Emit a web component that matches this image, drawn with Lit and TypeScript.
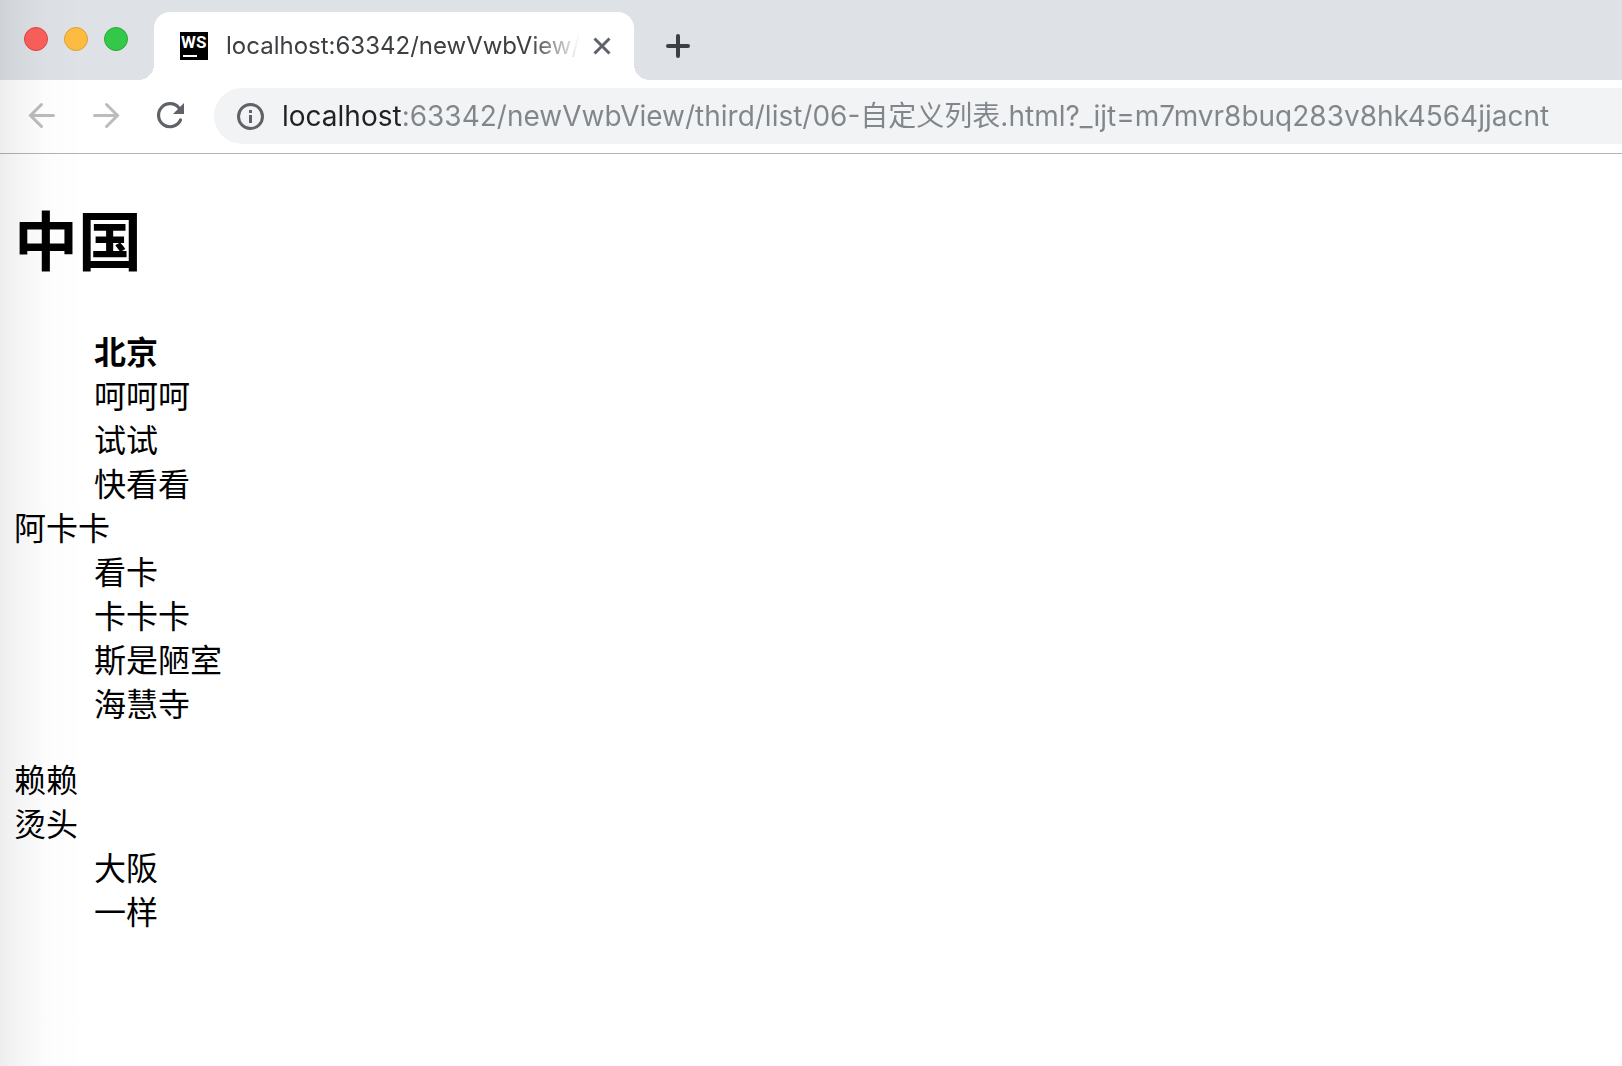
import { LitElement, html, css } from "lit";
import { customElement, property } from "lit/decorators.js";

@customElement("tab-strip")
export class TabStrip extends LitElement {
  @property() title = "";

  static styles = css`
    :host {
      display: flex;
      align-items: flex-end;
      height: 80px;
      background: #dee1e6;
      font-family: Inter, "Liberation Sans", "Noto Sans CJK SC", sans-serif;
    }
    button {
      appearance: none;
      margin: 0;
      padding: 0;
      border: 0;
      background: none;
    }
    svg {
      display: block;
    }
    .lights {
      display: flex;
      gap: 16px;
      padding: 0 26px 29px 24px;
    }
    .light {
      box-sizing: border-box;
      width: 24px;
      height: 24px;
      border: 1px solid;
      border-radius: 50%;
    }
    .close-light {
      background: #fc605c;
      border-color: #e2443f;
    }
    .min-light {
      background: #fdbc40;
      border-color: #dfa034;
    }
    .max-light {
      background: #34c84a;
      border-color: #27aa35;
    }
    .tab {
      position: relative;
      box-sizing: border-box;
      display: flex;
      align-items: center;
      flex: 0 1 480px;
      min-width: 0;
      height: 68px;
      padding: 0 20px 0 26px;
      background: #fff;
      border-radius: 16px 16px 0 0;
    }
    .tab::before,
    .tab::after {
      content: "";
      position: absolute;
      bottom: 0;
      width: 16px;
      height: 16px;
    }
    .tab::before {
      right: 100%;
      background: radial-gradient(circle at 0 0, transparent 16px, #fff 16px);
    }
    .tab::after {
      left: 100%;
      background: radial-gradient(circle at 100% 0, transparent 16px, #fff 16px);
    }
    .favicon {
      flex: none;
      box-sizing: border-box;
      width: 28px;
      height: 28px;
      padding: 2px 0 0 1px;
      background: #000;
      color: #fff;
      font: 700 17px/16px Roboto, sans-serif;
    }
    .favicon::after {
      content: "";
      display: block;
      width: 14px;
      height: 2px;
      margin: 5px 0 0 2px;
      background: #fff;
    }
    .title {
      flex: 1;
      min-width: 0;
      margin: 0 10px 0 18px;
      white-space: nowrap;
      color: #3c4043;
      font-size: 24px;
      line-height: 32px;
      -webkit-mask-image: linear-gradient(90deg, #000 calc(100% - 50px), transparent);
      mask-image: linear-gradient(90deg, #000 calc(100% - 50px), transparent);
    }
    .new {
      margin: 0 0 14px 24px;
    }
  `;

  render() {
    return html`
      <div class="lights">
        <button class="light close-light" aria-label="Close window"></button>
        <button class="light min-light" aria-label="Minimize window"></button>
        <button class="light max-light" aria-label="Zoom window"></button>
      </div>
      <div class="tab">
        <span class="favicon">WS</span>
        <span class="title">${this.title}</span>
        <button aria-label="Close tab">
          <svg width="24" height="24" viewBox="0 0 24 24" fill="none" stroke="#5f6368" stroke-width="3">
            <path d="M4.5 4.5l15 15M19.5 4.5l-15 15" />
          </svg>
        </button>
      </div>
      <button class="new" aria-label="New tab">
        <svg width="40" height="40" viewBox="0 0 40 40" fill="none" stroke="#3c4043" stroke-width="4" stroke-linecap="round">
          <path d="M20 10v20M10 20h20" />
        </svg>
      </button>
    `;
  }
}

@customElement("address-bar")
export class AddressBar extends LitElement {
  @property() url = "";

  static styles = css`
    :host {
      display: flex;
      align-items: center;
      gap: 24px;
      box-sizing: border-box;
      height: 74px;
      padding: 8px 0 9px 22px;
      border-bottom: 1px solid #b4b4b5;
      background: #fff;
    }
    button {
      appearance: none;
      flex: none;
      margin: 0;
      padding: 0;
      border: 0;
      background: none;
    }
    svg {
      display: block;
    }
    .omnibox {
      display: flex;
      align-items: center;
      flex: 1;
      min-width: 0;
      height: 56px;
      padding-left: 16px;
      background: #f1f3f4;
      border-radius: 28px 0 0 28px;
    }
    .url {
      flex: 1;
      min-width: 0;
      height: 40px;
      margin: 0 0 0 12px;
      padding: 0;
      border: 0;
      outline: 0;
      color: transparent;
      background: linear-gradient(90deg, #202124 121px, #80868b 121px);
      -webkit-background-clip: text;
      background-clip: text;
      font: 28px/40px Inter, "Noto Sans CJK SC", sans-serif;
    }
  `;

  render() {
    return html`
      <button aria-label="Back">
        <svg width="40" height="40" viewBox="0 0 40 40" fill="none" stroke="#babcbe" stroke-width="3" stroke-linecap="round">
          <path d="M31.500 19.500H9M19.500 8.500L8.500 19.500l11 11" />
        </svg>
      </button>
      <button aria-label="Forward">
        <svg width="40" height="40" viewBox="0 0 40 40" fill="none" stroke="#babcbe" stroke-width="3" stroke-linecap="round">
          <path d="M8.500 19.500H31M20.500 8.500L31.500 19.500l-11 11" />
        </svg>
      </button>
      <button aria-label="Reload">
        <svg width="40" height="40" viewBox="0 0 40 40">
          <path d="M30.500 24A11.500 11.500 0 1 1 29 12" fill="none" stroke="#5f6368" stroke-width="3.200" stroke-linecap="round" />
          <path d="M34 7v11H23z" fill="#5f6368" />
        </svg>
      </button>
      <div class="omnibox">
        <button aria-label="Site information">
          <svg width="40" height="40" viewBox="0 0 40 40">
            <circle cx="20.500" cy="20.500" r="12" fill="none" stroke="#5f6368" stroke-width="3" />
            <path d="M19 14h3v3h-3zM19 19h3v8h-3z" fill="#5f6368" />
          </svg>
        </button>
        <input class="url" type="text" aria-label="Address" spellcheck="false" .value=${this.url} />
      </div>
    `;
  }
}

@customElement("app-root")
export class AppRoot extends LitElement {
  static styles = css`
    :host {
      display: block;
      position: relative;
      min-height: 100vh;
      background: #fff;
      color: #000;
    }
    .edge {
      position: absolute;
      inset: 0 auto 0 0;
      width: 84px;
      pointer-events: none;
      background: linear-gradient(90deg, rgba(0, 0, 0, 0.07), rgba(0, 0, 0, 0.045) 20%, rgba(0, 0, 0, 0.012) 55%, transparent);
    }
    main {
      padding: 37px 14px;
      font: 32px/44px "Noto Sans CJK SC", sans-serif;
    }
    h1 {
      margin: 0 0 45px;
      font-size: 64px;
      line-height: 92px;
    }
    dl {
      margin: 0 0 32px;
    }
    dd {
      margin: 0 0 0 80px;
    }
    .term {
      font-weight: 700;
    }
  `;

  render() {
    return html`
      <tab-strip .title=${"localhost:63342/newVwbView/"}></tab-strip>
      <address-bar
        .url=${"localhost:63342/newVwbView/third/list/06-自定义列表.html?_ijt=m7mvr8buq283v8hk4564jjacnt"}
      ></address-bar>
      <main>
        <dl>
          <dt><h1>中国</h1></dt>
          <dd class="term">北京</dd>
          <dd>呵呵呵</dd>
          <dd>试试</dd>
          <dd>快看看</dd>
          <dt>阿卡卡</dt>
          <dd>看卡</dd>
          <dd>卡卡卡</dd>
          <dd>斯是陋室</dd>
          <dd>海慧寺</dd>
        </dl>
        <dl>
          <dt>赖赖</dt>
          <dt>烫头</dt>
          <dd>大阪</dd>
          <dd>一样</dd>
        </dl>
      </main>
      <div class="edge"></div>
    `;
  }
}
